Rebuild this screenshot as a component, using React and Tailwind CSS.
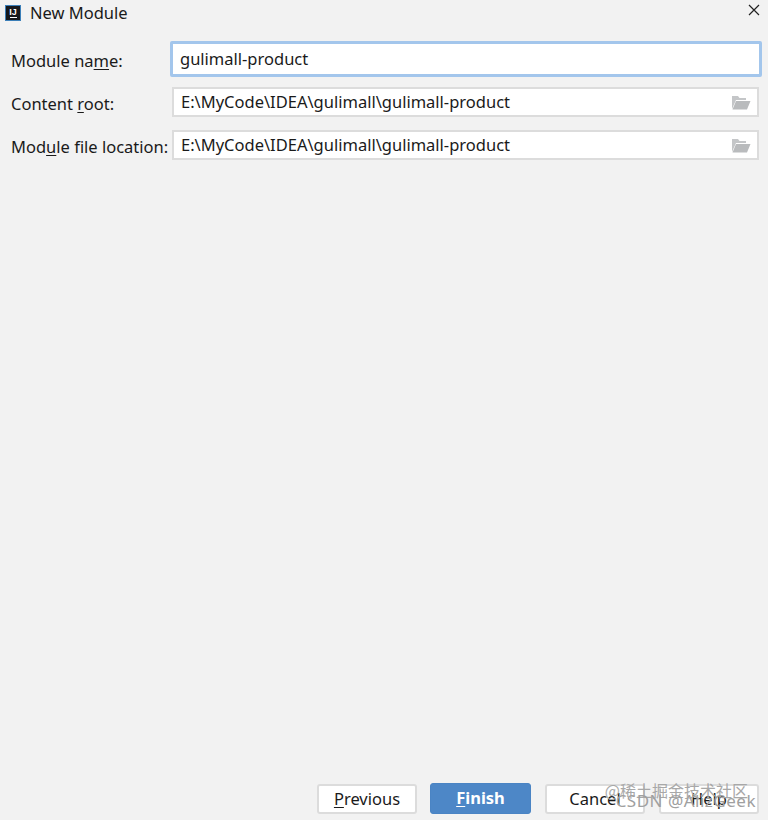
import React from 'react';

const Folder = () => (
    <svg width="20" height="15" viewBox="0 0 20 15" className="shrink-0">
        <path d="M1 14V1h6l1.500 2H15v2H5z" fill="#c4c6c8" />
        <path d="M1.500 14.500L5 6h14.500l-3.500 8.500z" fill="#b9bbbd" />
    </svg>
);

const PathField = ({ value }) => (
    <div className="flex h-[30px] flex-1 items-center justify-between border-2 border-[#dcdcdc] bg-white pl-[7px] pr-[6px]">
        <span>{value}</span>
        <Folder />
    </div>
);

const FooterButton = ({ children, primary }) => (
    <button
        className={
            primary
                ? 'h-[31px] w-[101px] rounded-[3px] border border-[#4a84c4] bg-[#4d87c7] text-[16.500px] font-bold text-white'
                : 'h-[30px] w-[100px] rounded-[3px] border-2 border-[#dcdcdc] bg-white text-[16.500px] text-[#1a1a1a]'
        }
    >
        {children}
    </button>
);

const App = () => {
    return (
        <div className="relative flex h-[820px] w-[768px] flex-col overflow-hidden bg-[#f2f2f2] font-['Noto_Sans',sans-serif] text-[16.500px] text-[#1a1a1a]">
            <div className="flex h-[26px] items-center justify-between pl-[5px] pr-[8px]">
                <div className="flex items-center gap-[9px]">
                    <div className="flex h-[16px] w-[16px] flex-col items-center justify-center border border-[#3c7fb8] bg-[#16181c]">
                        <span className="font-['Liberation_Sans',sans-serif] text-[9px] leading-[8px] font-bold text-white">IJ</span>
                        <span className="mt-[1px] h-[1px] w-[7px] bg-white"></span>
                    </div>
                    <span>New Module</span>
                </div>
                <svg width="12" height="12" viewBox="0 0 12 12" className="mb-[6px]">
                    <path d="M1 1l10 10M11 1L1 11" stroke="#222" strokeWidth="1.200" />
                </svg>
            </div>

            <div className="mt-[15px] flex flex-col pl-[11px] pr-[9px]">
                <div className="flex h-[36px] items-center">
                    <label className="w-[159px] shrink-0 pt-[4px]">
                        Module na<span className="underline underline-offset-2">m</span>e:
                    </label>
                    <div className="-mr-[3px] flex h-[36px] flex-1 items-center rounded-[2px] border-[3px] border-[#a3c6ec] bg-white pl-[7px]">
                        gulimall-product
                    </div>
                </div>
                <div className="mt-[10px] flex items-center">
                    <label className="w-[161px] shrink-0 pt-[4px]">
                        Content <span className="underline underline-offset-2">r</span>oot:
                    </label>
                    <PathField value="E:\MyCode\IDEA\gulimall\gulimall-product" />
                </div>
                <div className="mt-[13px] flex items-center">
                    <label className="w-[161px] shrink-0 whitespace-nowrap pt-[4px]">
                        Mod<span className="underline underline-offset-2">u</span>le file location:
                    </label>
                    <PathField value="E:\MyCode\IDEA\gulimall\gulimall-product" />
                </div>
            </div>

            <div className="mt-auto mb-[6px] flex items-end justify-end gap-[14px] pr-[9px]">
                <FooterButton>
                    <span className="underline underline-offset-2">P</span>revious
                </FooterButton>
                <div className="-ml-[1px] flex">
                    <FooterButton primary>
                        <span className="underline underline-offset-2">F</span>inish
                    </FooterButton>
                </div>
                <FooterButton>Cancel</FooterButton>
                <FooterButton>Help</FooterButton>
            </div>

            <div className="absolute right-[20px] bottom-[21px] font-['Noto_Sans_CJK_SC',sans-serif] text-[16px] leading-[18px] text-[#a8a8a8]">
                @稀土掘金技术社区
            </div>
            <div className="absolute right-[12px] bottom-[7px] text-[17px] leading-[24px] tracking-[0.500px] text-[#a0a0a0]">
                CSDN @AlizGeek
            </div>
        </div>
    );
};

export default App;
